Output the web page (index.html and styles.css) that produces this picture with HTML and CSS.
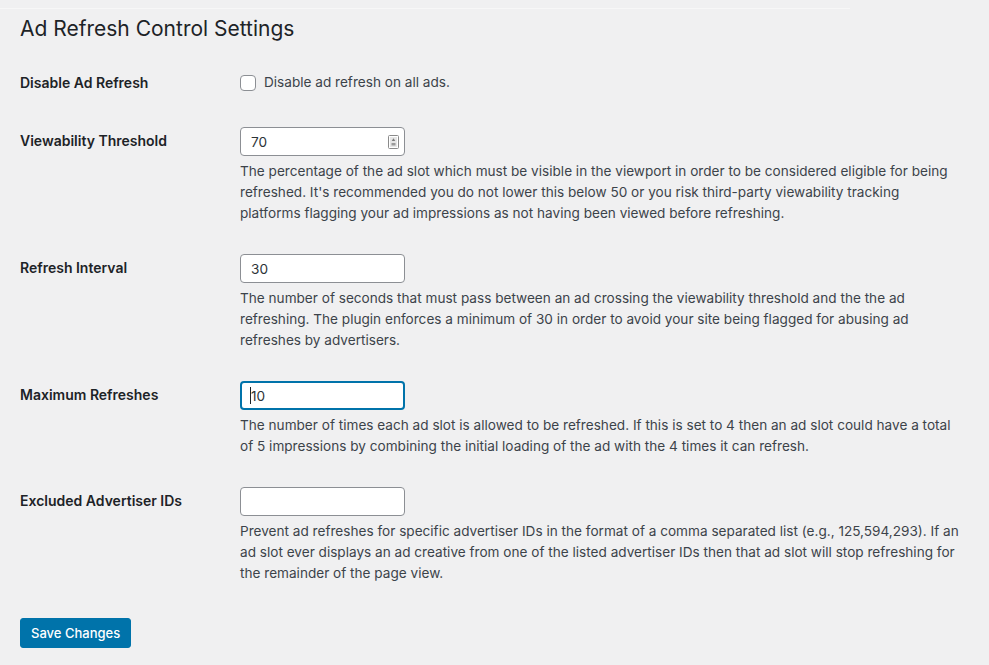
FILE: index.html
```html
<!DOCTYPE html>
<html>
<head>
<meta charset="utf-8">
<link rel="stylesheet" href="styles.css">
</head>
<body>
<div class="topline"></div>
<div class="wrap">
  <h1 class="title">Ad Refresh Control Settings</h1>
  <table class="form-table">
    <tr class="row-check">
      <th>Disable Ad Refresh</th>
      <td>
        <label class="check"><span class="box"></span>Disable ad refresh on all ads.</label>
      </td>
    </tr>
    <tr>
      <th>Viewability Threshold</th>
      <td>
        <div class="field">
          <input class="input" type="text" value="70">
          <svg class="spin" width="11" height="14" viewBox="0 0 11 14"><rect x="0.5" y="0.5" width="10" height="13" rx="1" fill="#fff" stroke="#8a8a8a"/><rect x="2" y="2" width="7" height="10" fill="#e6e6e6"/><path d="M5.5 3.2 L7.3 6 H3.7 Z" fill="#7a7a7a"/><rect x="3.5" y="8" width="4" height="2.5" fill="#9a9a9a"/></svg>
        </div>
        <p class="desc">The percentage of the ad slot which must be visible in the viewport in order to be considered eligible for being refreshed. It's recommended you do not lower this below 50 or you risk third-party viewability tracking platforms flagging your ad impressions as not having been viewed before refreshing.</p>
      </td>
    </tr>
    <tr>
      <th>Refresh Interval</th>
      <td>
        <div class="field"><input class="input" type="text" value="30"></div>
        <p class="desc">The number of seconds that must pass between an ad crossing the viewability threshold and the the ad refreshing. The plugin enforces a minimum of 30 in order to avoid your site being flagged for abusing ad refreshes by advertisers.</p>
      </td>
    </tr>
    <tr>
      <th>Maximum Refreshes</th>
      <td>
        <div class="field"><input class="input focus" type="text" value="10"><span class="caret"></span></div>
        <p class="desc">The number of times each ad slot is allowed to be refreshed. If this is set to 4 then an ad slot could have a total of 5 impressions by combining the initial loading of the ad with the 4 times it can refresh.</p>
      </td>
    </tr>
    <tr>
      <th>Excluded Advertiser IDs</th>
      <td>
        <div class="field"><input class="input" type="text" value=""></div>
        <p class="desc">Prevent ad refreshes for specific advertiser IDs in the format of a comma separated list (e.g., 125,594,293). If an ad slot ever displays an ad creative from one of the listed advertiser IDs then that ad slot will stop refreshing for the remainder of the page view.</p>
      </td>
    </tr>
  </table>
  <div class="submit"><button class="button">Save Changes</button></div>
</div>
</body>
</html>
```
FILE: styles.css
```css
html, body {
  margin: 0;
  padding: 0;
  background: #f0f0f1;
}
body {
  font-family: Inter, "Noto Sans", sans-serif;
  font-size: 13px;
  color: #1d2327;
  height: 665px;
  overflow: hidden;
}
.topline {
  height: 1px;
  width: 850px;
  margin-top: 8px;
  background: #f7f7f7;
}
.wrap {
  padding: 0 20px;
}
.title {
  font-size: 21px;
  font-weight: 400;
  margin: 0;
  padding: 6px 0 4px;
  line-height: 1.3;
  color: #1d2327;
}
.form-table {
  border-collapse: collapse;
  margin-top: 8px;
  width: 100%;
}
.form-table th {
  width: 200px;
  padding: 20px 10px 20px 0;
  text-align: left;
  vertical-align: top;
  font-weight: 600;
  font-size: 14px;
  line-height: 1.3;
}
.form-table td {
  padding: 15px 10px;
  vertical-align: top;
  line-height: 1.3;
}
.row-check th, .row-check td {
  padding-top: 20px;
}
.check {
  display: flex;
  align-items: center;
  font-size: 13.6px;
  color: #3c434a;
}
.box {
  width: 14px;
  height: 14px;
  border: 1px solid #8c8f94;
  border-radius: 4px;
  background: #fff;
  margin-right: 8px;
}
.field {
  position: relative;
  width: 165px;
}
.input {
  box-sizing: border-box;
  width: 165px;
  height: 29px;
  border: 1px solid #8c8f94;
  border-radius: 4px;
  background: #fff;
  padding: 0 10px;
  font-family: inherit;
  font-size: 13.6px;
  color: #2c3338;
  outline: none;
}
.input.focus {
  border: 2px solid #0073aa;
  padding-left: 9px;
}
.caret {
  position: absolute;
  left: 10px;
  top: 6px;
  width: 1px;
  height: 17px;
  background: #1d2327;
}
.spin {
  position: absolute;
  right: 6px;
  top: 8px;
}
.desc {
  margin: 5px 0 0;
  font-size: 13.6px;
  line-height: 21px;
  color: #3c434a;
}
.submit {
  padding-top: 19px;
}
.button {
  background: #0073aa;
  border: 1px solid #0073aa;
  color: #fff;
  border-radius: 3px;
  height: 30px;
  padding: 0 10px;
  font-family: inherit;
  font-size: 13px;
  font-weight: 500;
}
```
